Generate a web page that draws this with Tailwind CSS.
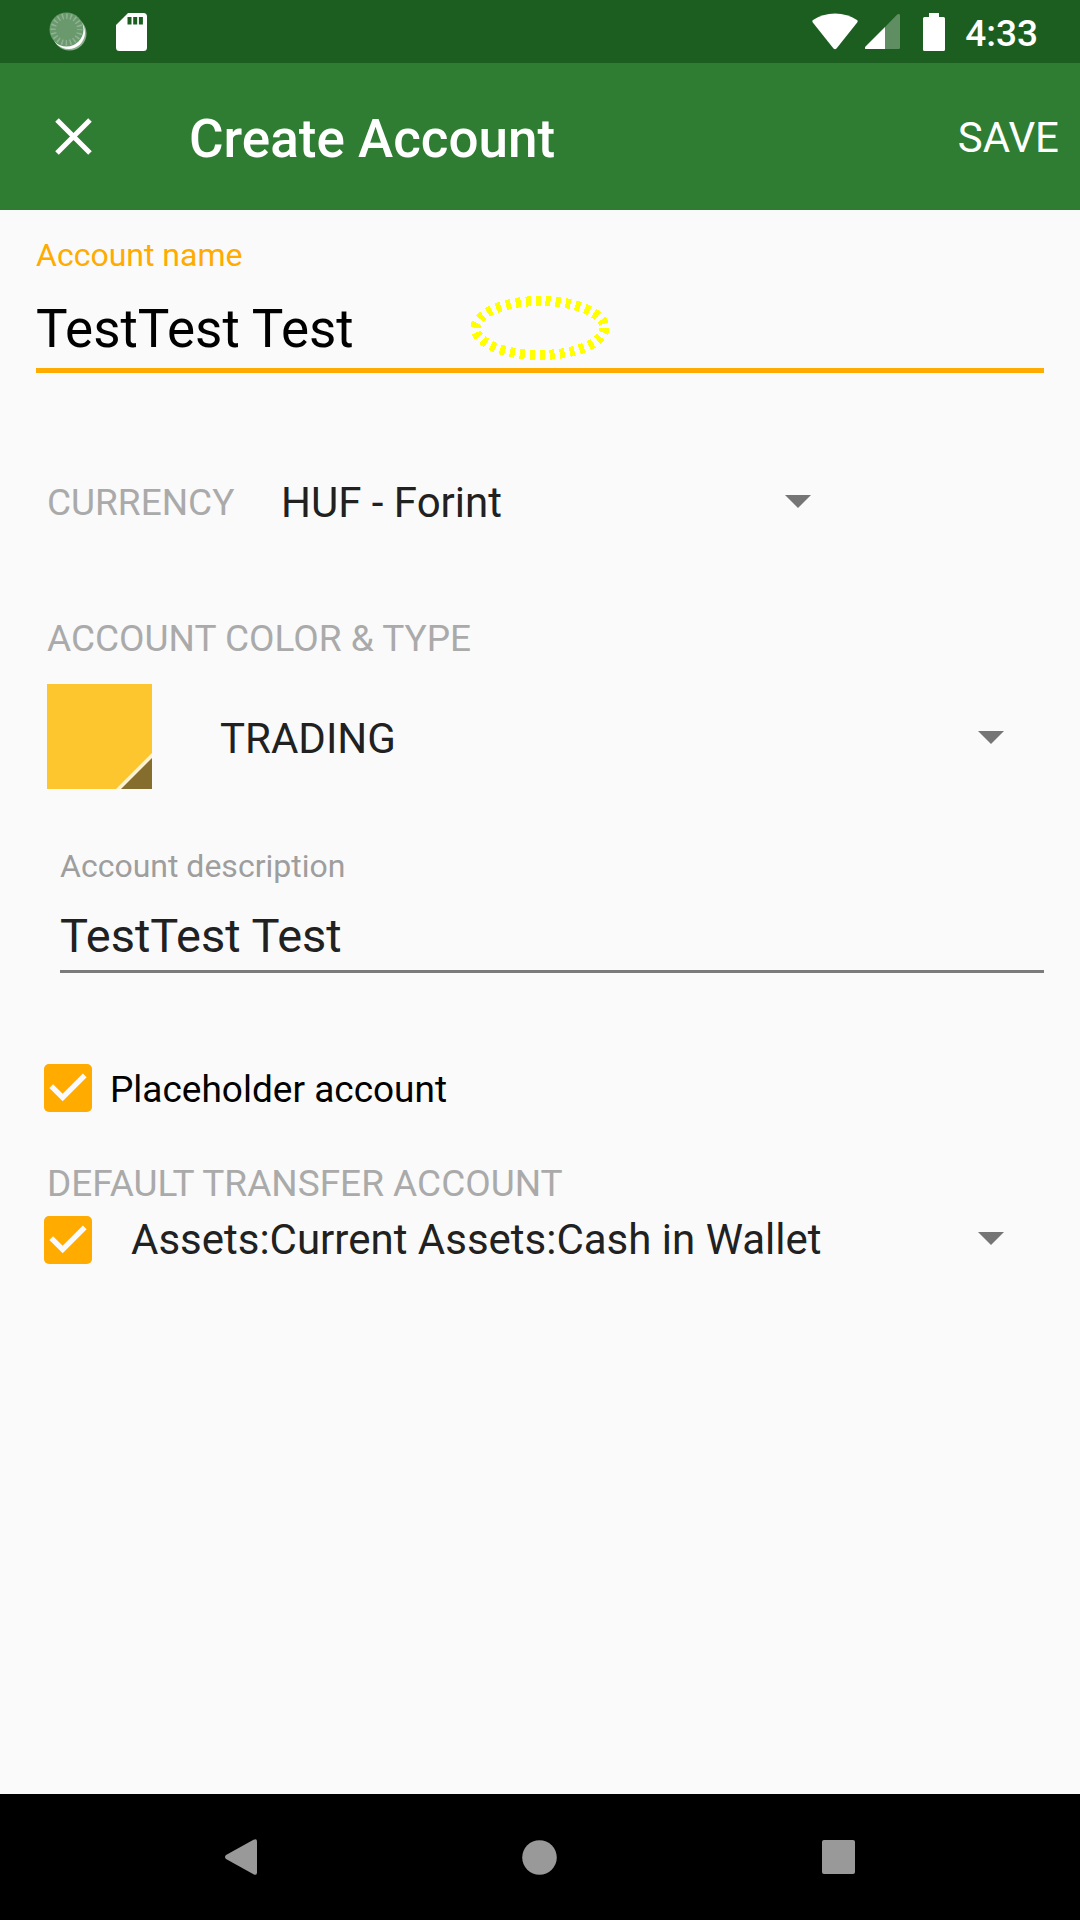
<!DOCTYPE html>
<html lang="en">
<head>
<meta charset="utf-8">
<meta name="viewport" content="width=device-width, initial-scale=1">
<title>Create Account</title>
<script src="https://cdn.jsdelivr.net/npm/@tailwindcss/browser@4"></script>
</head>
<body class="flex min-h-screen flex-col bg-[#fafafa] font-['Roboto',sans-serif] text-[#212121]">

<!-- Status bar -->
<div class="flex h-[63px] shrink-0 items-center justify-between bg-[#1b5e20] pr-[42px] pl-[49px] text-white">
  <div class="flex items-center gap-[28px]">
    <svg class="h-[40px] w-[39px]" viewBox="0 0 39 40" aria-label="Working">
      <circle cx="20.500" cy="21.500" r="17" fill="#fff" fill-opacity=".5"/>
      <circle cx="19.500" cy="20.500" r="16.500" fill="#fff"/>
      <circle cx="17.500" cy="17.500" r="17" fill="#69996c"/>
      <circle cx="17.500" cy="17.500" r="13.300" fill="none" stroke="#8fb391" stroke-width="5.500" stroke-dasharray="1.500 2.678" stroke-dashoffset=".75"/>
    </svg>
    <svg class="h-[38px] w-[31px]" viewBox="0 0 31 38" aria-label="SD card">
      <path fill="#fff" fill-rule="evenodd" d="M12 0H27.500Q31 0 31 3.500V34.500Q31 38 27.500 38H3.500Q0 38 0 34.500V12ZM11.500 4V11.500H15.500V4ZM17.200 4V11.500H21.200V4ZM22.900 4V11.500H26.900V4Z"/>
    </svg>
  </div>
  <div class="flex items-center">
    <svg class="h-[37px] w-[46px]" viewBox="0 0 46 37" aria-label="Wi-Fi">
      <path fill="#fff" d="M.8 9.500Q-.3 8 1 7Q10.500 .5 23 .5T45 7Q46.300 8 45.200 9.500L24.500 35.500Q23 37 21.500 35.500Z"/>
    </svg>
    <svg class="ml-[7px] h-[35px] w-[35px]" viewBox="0 0 35 35" aria-label="Mobile signal">
      <path fill="#fff" fill-opacity=".3" d="M20 13L32 .8Q35-1.500 35 2V33.500Q35 35 33.500 35H20Z"/>
      <path fill="#fff" d="M20 13V35H1.500Q-1 35 .5 32.500Z"/>
    </svg>
    <svg class="ml-[23px] h-[38px] w-[22px]" viewBox="0 0 22 38" aria-label="Battery">
      <path fill="#fff" d="M6 0H16V4H20.500Q22 4 22 5.500V36.500Q22 38 20.500 38H1.500Q0 38 0 36.500V5.500Q0 4 1.500 4H6Z"/>
    </svg>
    <span class="ml-5 pt-1 text-[37px] leading-10 font-medium">4:33</span>
  </div>
</div>

<!-- App bar -->
<header class="flex h-[147px] shrink-0 items-center bg-[#2e7d32] pr-[21px] pl-[42px] text-white">
  <button type="button" aria-label="Close" class="grid size-[63px] place-items-center">
    <svg class="size-[37px]" viewBox="0 0 37 37"><path d="M2 2L35 35M35 2L2 35" stroke="#fff" stroke-width="5"/></svg>
  </button>
  <h1 class="ml-[84px] flex-1 pt-1 text-[53px] leading-[62px] font-medium">Create Account</h1>
  <button type="button" class="pt-0.5 text-[42px] leading-[56px]">SAVE</button>
</header>

<main class="flex-1 pt-[25px] pr-9 pl-9">
  <form>
    <!-- Account name -->
    <div class="relative">
      <label for="name" class="block text-[32px] leading-10 text-[#ffab00]">Account name</label>
      <input id="name" type="text" value="TestTest Test" class="mt-[23px] block h-[75px] w-full border-b-[5px] border-[#ffab00] pb-2 text-[53px] leading-[62px] text-black outline-none">
      <svg class="pointer-events-none absolute bottom-[13px] left-1/2 h-[64px] w-[140px] -translate-x-1/2" viewBox="0 0 140 64" shape-rendering="crispEdges" aria-hidden="true">
        <ellipse cx="70" cy="32" rx="64.500" ry="27" fill="none" stroke="#ff0" stroke-width="10" stroke-dasharray="5 5"/>
      </svg>
    </div>

    <!-- Currency -->
    <div class="mt-[102px] flex h-14 items-center pl-[11px]">
      <label for="currency" class="w-[234px] text-[37px] leading-[56px] text-[#aaa]">CURRENCY</label>
      <div class="relative w-[557px]">
        <select id="currency" class="block h-14 w-full appearance-none text-[42px] leading-[56px] outline-none"><option>HUF - Forint</option></select>
        <svg class="pointer-events-none absolute top-[20px] right-[27px] h-[13px] w-[26px]" viewBox="0 0 26 13" aria-hidden="true"><path fill="#757575" d="M0 0H26L13 13Z"/></svg>
      </div>
    </div>

    <!-- Color and type -->
    <div class="mt-[80px] pl-[11px]">
      <label for="type" class="block text-[37px] leading-[56px] text-[#aaa]">ACCOUNT COLOR &amp; TYPE</label>
      <div class="mt-[17px] flex items-center">
        <button type="button" aria-label="Account color" class="size-[105px]">
          <svg class="size-[105px]" viewBox="0 0 105 105"><path fill="#fdc52e" d="M0 0H105V105H0Z"/><path fill="#fff3d3" d="M105 69V105H69Z"/><path fill="#856d2e" d="M105 74V105H74Z"/></svg>
        </button>
        <div class="relative ml-[68px] flex-1 pt-1">
          <select id="type" class="block h-14 w-full appearance-none text-[42px] leading-[56px] outline-none"><option>TRADING</option></select>
          <svg class="pointer-events-none absolute top-[24px] right-[40px] h-[13px] w-[26px]" viewBox="0 0 26 13" aria-hidden="true"><path fill="#757575" d="M0 0H26L13 13Z"/></svg>
        </div>
      </div>
    </div>

    <!-- Description -->
    <div class="mt-[57px] pl-6">
      <label for="description" class="block text-[32px] leading-10 text-[#9e9e9e]">Account description</label>
      <input id="description" type="text" value="TestTest Test" class="mt-[20px] block h-[67px] w-full border-b-[3px] border-[#7b7b7b] pb-1.5 text-[47px] leading-[58px] outline-none">
    </div>

    <!-- Placeholder account -->
    <div class="mt-[91px] flex items-center pl-2">
      <div class="grid size-12">
        <input id="placeholder" type="checkbox" checked class="peer col-start-1 row-start-1 size-12 appearance-none rounded-[5px] border-4 border-[#757575] checked:border-0 checked:bg-[#ffab00]">
        <svg class="pointer-events-none invisible col-start-1 row-start-1 size-12 peer-checked:visible" viewBox="3 3 18 18" aria-hidden="true"><path fill="#fafafa" d="M10 17l-5-5 1.410-1.410L10 14.170l7.590-7.590L19 8z"/></svg>
      </div>
      <label for="placeholder" class="ml-[18px] pt-1 text-[37px] leading-[44px] text-black">Placeholder account</label>
    </div>

    <!-- Default transfer account -->
    <div class="mt-[44px]">
      <label for="transfer" class="block pl-[11px] text-[37px] leading-[56px] text-[#aaa]">DEFAULT TRANSFER ACCOUNT</label>
      <div class="flex items-center pl-2">
        <div class="grid size-12">
          <input id="use-transfer" type="checkbox" checked aria-label="Use default transfer account" class="peer col-start-1 row-start-1 size-12 appearance-none rounded-[5px] border-4 border-[#757575] checked:border-0 checked:bg-[#ffab00]">
          <svg class="pointer-events-none invisible col-start-1 row-start-1 size-12 peer-checked:visible" viewBox="3 3 18 18" aria-hidden="true"><path fill="#fafafa" d="M10 17l-5-5 1.410-1.410L10 14.170l7.590-7.590L19 8z"/></svg>
        </div>
        <div class="relative ml-[39px] flex-1">
          <select id="transfer" class="block h-14 w-full appearance-none text-[42px] leading-[56px] outline-none"><option>Assets:Current Assets:Cash in Wallet</option></select>
          <svg class="pointer-events-none absolute top-[20px] right-[40px] h-[13px] w-[26px]" viewBox="0 0 26 13" aria-hidden="true"><path fill="#757575" d="M0 0H26L13 13Z"/></svg>
        </div>
      </div>
    </div>
  </form>
</main>

<!-- Navigation bar -->
<nav class="grid h-[126px] shrink-0 grid-cols-3 bg-black px-[92px]">
  <button type="button" aria-label="Back" class="grid place-items-center">
    <svg class="h-[36px] w-[32px]" viewBox="0 0 32 36"><path fill="#999" d="M1 16L28.500 .8Q32-.8 32 2.500V33.500Q32 36.800 28.500 35.200L1 20Q-1 18 1 16Z"/></svg>
  </button>
  <button type="button" aria-label="Home" class="grid place-items-center">
    <svg class="size-[35px]" viewBox="0 0 35 35"><circle cx="17.500" cy="17.500" r="17.300" fill="#999"/></svg>
  </button>
  <button type="button" aria-label="Recent apps" class="grid place-items-center">
    <svg class="size-[34px]" viewBox="0 0 34 34"><rect width="33" height="34" rx="2" fill="#999"/></svg>
  </button>
</nav>
</body>
</html>
